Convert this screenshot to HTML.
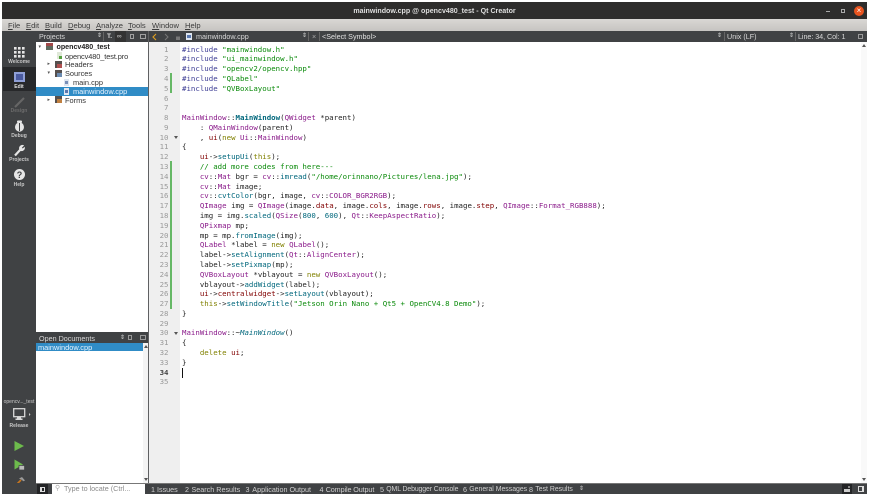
<!DOCTYPE html>
<html><head><meta charset="utf-8">
<style>
html,body{margin:0;padding:0;width:869px;height:497px;overflow:hidden;background:#fff}
body{position:relative;font-family:"Liberation Sans",sans-serif}
div,span.a{position:absolute}
.t{white-space:pre;line-height:10px;height:10px}
#root{position:absolute;left:0;top:0;width:869px;height:497px;filter:blur(.35px)}
.menu{top:20px;font-size:7.6px;color:#3c3c3c;white-space:pre;line-height:11px}
.menu u{text-decoration:underline}
.hd{color:#d8d8d8;font-size:7.2px;white-space:pre;line-height:11px}
.side{color:#c8c8c8;font-size:5px;font-weight:bold;width:34px;left:2px;text-align:center;line-height:6px}
.tree{font-size:7.4px;color:#333;white-space:pre;line-height:9px;height:9px}
.ln{left:150px;width:18.5px;margin-top:.5px;text-align:right;color:#9a9a9a;font:7.4px/10px "DejaVu Sans Mono","Liberation Mono",monospace;height:10px}
.c{left:182px;margin-top:.5px;font:7.42px/10px "DejaVu Sans Mono","Liberation Mono",monospace;white-space:pre;color:#222;height:10px}
.p{color:#3e3e95}.s{color:#0a8a0a}.y{color:#8a1a8a}.f{color:#00677c}.k{color:#808000}.r{color:#800000}.v{color:#5a3a5a}
.bt{top:484px;font-size:7.2px;color:#d0d0d0;white-space:pre;line-height:11px}
</style></head><body><div id="root">
<!-- window -->
<div style="left:2px;top:2px;width:865px;height:492px;background:#fff"></div>
<!-- title bar -->
<div style="left:2px;top:2px;width:865px;height:17px;background:#2e2d2c"></div>
<div class="t" style="left:2px;width:865px;top:6px;text-align:center;color:#dfdfdf;font-size:7.1px;font-weight:bold">mainwindow.cpp @ opencv480_test - Qt Creator</div>
<div style="left:826px;top:11px;width:4px;height:1px;background:#aaa"></div>
<div style="left:841px;top:9px;width:4px;height:4px;border:1px solid #aaa;box-sizing:border-box"></div>
<div style="left:854px;top:6px;width:10px;height:10px;border-radius:50%;background:#e9541f"></div>
<div class="t" style="left:854px;top:5.5px;width:10px;text-align:center;color:#fff;font-size:8px">×</div>
<!-- menu bar -->
<div style="left:2px;top:19px;width:865px;height:12px;background:linear-gradient(#d9d7d4,#c6c4c1)"></div>
<div class="menu" style="left:8px"><u>F</u>ile</div>
<div class="menu" style="left:26px"><u>E</u>dit</div>
<div class="menu" style="left:45px"><u>B</u>uild</div>
<div class="menu" style="left:68px"><u>D</u>ebug</div>
<div class="menu" style="left:96px"><u>A</u>nalyze</div>
<div class="menu" style="left:128px"><u>T</u>ools</div>
<div class="menu" style="left:152px"><u>W</u>indow</div>
<div class="menu" style="left:185px"><u>H</u>elp</div>
<!-- toolbar row -->
<div style="left:2px;top:31px;width:865px;height:11px;background:#404244"></div>
<div class="hd" style="left:39px;top:31px">Projects</div>
<div class="hd" style="left:97px;top:31px;font-size:6px">⇕</div>
<div style="left:103px;top:32px;width:1px;height:9px;background:#666"></div>
<div class="hd" style="left:107px;top:31px;font-size:6.5px;font-weight:bold">T.</div>
<div style="left:115px;top:31px;width:11px;height:11px;background:#333"></div>
<div class="hd" style="left:117px;top:31px;font-size:6.5px">∞</div>
<div style="left:130px;top:34px;width:4px;height:5px;border:1px solid #a0a0a0;box-sizing:border-box"></div>
<div style="left:140px;top:34px;width:6px;height:5px;border:1px solid #a0a0a0;box-sizing:border-box"></div>
<div style="left:148px;top:31px;width:1px;height:452px;background:#5f6062"></div>
<svg style="position:absolute;left:152px;top:33px" width="30" height="8"><path d="M4 1 1 4l3 3" fill="none" stroke="#e0a020" stroke-width="1.1"/><path d="M13 1l3 3-3 3" fill="none" stroke="#777" stroke-width="1"/><rect x="24" y="3.5" width="4" height="3.5" fill="#777"/></svg>
<div style="left:186px;top:33px;width:6px;height:7px;background:#dfe6f0"></div>
<div style="left:187px;top:35px;width:4px;height:3px;background:#5a78b0"></div>
<div class="hd" style="left:196px;top:31px;color:#d8d8d8">mainwindow.cpp</div>
<div class="hd" style="left:302px;top:31px;font-size:6px">⇕</div>
<div style="left:308px;top:32px;width:1px;height:9px;background:#666"></div>
<div class="hd" style="left:312px;top:31px;color:#aaa">×</div>
<div style="left:319px;top:32px;width:1px;height:9px;background:#666"></div>
<div class="hd" style="left:322px;top:31px;color:#e0e0e0">&lt;Select Symbol&gt;</div>
<div class="hd" style="left:717px;top:31px;font-size:6px">⇕</div>
<div style="left:724px;top:32px;width:1px;height:9px;background:#666"></div>
<div class="hd" style="left:727px;top:31px">Unix (LF)</div>
<div class="hd" style="left:789px;top:31px;font-size:6px">⇕</div>
<div style="left:795px;top:32px;width:1px;height:9px;background:#666"></div>
<div class="hd" style="left:798px;top:31px;letter-spacing:-.06px">Line: 34, Col: 1</div>
<div style="left:858px;top:34px;width:5px;height:5px;border:1px solid #999;box-sizing:border-box"></div>
<!-- mode bar -->
<div style="left:2px;top:42px;width:34px;height:452px;background:#404244"></div>
<svg style="position:absolute;left:14px;top:47px" width="11" height="11" fill="#e6e6e6"><rect x="0" y="0" width="2.6" height="2.6"/><rect x="4" y="0" width="2.6" height="2.6"/><rect x="8" y="0" width="2.6" height="2.6"/><rect x="0" y="4" width="2.6" height="2.6"/><rect x="4" y="4" width="2.6" height="2.6"/><rect x="8" y="4" width="2.6" height="2.6"/><rect x="0" y="8" width="2.6" height="2.6"/><rect x="4" y="8" width="2.6" height="2.6"/><rect x="8" y="8" width="2.6" height="2.6"/></svg>
<div class="side" style="top:59px">Welcome</div>
<div style="left:3px;top:67px;width:33px;height:24px;background:#27282a"></div>
<div style="left:14px;top:72px;width:11px;height:10px;background:#8f9fd6"></div>
<div style="left:16px;top:74px;width:7px;height:6px;background:#4a5aa0"></div>
<div class="side" style="top:84px;color:#e0e0e0">Edit</div>
<svg style="position:absolute;left:13px;top:96px" width="13" height="13"><path d="M2 11 11 2" stroke="#666" stroke-width="2"/></svg>
<div class="side" style="top:108px;color:#6c6c6c">Design</div>
<svg style="position:absolute;left:14px;top:120px" width="11" height="12" fill="#e6e6e6"><ellipse cx="5.5" cy="7" rx="4.5" ry="4.6"/><rect x="3" y="0.5" width="5" height="2.5" rx="1"/><rect x="5" y="3" width="1" height="8" fill="#404244"/></svg>
<div class="side" style="top:133px">Debug</div>
<svg style="position:absolute;left:13px;top:144px" width="13" height="13"><path d="M2 11.5 7.5 5.5" stroke="#e6e6e6" stroke-width="2.2"/><path d="M6.5 5a3 3 0 0 1 4-3.5L8.5 3.6l1 1.4 2-1.6a3 3 0 0 1-4 3.2z" fill="#e6e6e6" stroke="#e6e6e6" stroke-width=".7"/></svg>
<div class="side" style="top:157px">Projects</div>
<div style="left:14px;top:169px;width:11px;height:11px;border-radius:50%;background:#e6e6e6"></div>
<div class="t" style="left:14px;width:11px;top:169.5px;text-align:center;color:#404244;font-size:9px;font-weight:bold">?</div>
<div class="side" style="top:182px">Help</div>
<div class="side" style="top:399px;font-weight:normal">opencv..._test</div>
<svg style="position:absolute;left:13px;top:408px" width="18" height="13"><rect x="0.7" y="0.7" width="11" height="8" fill="#404244" stroke="#d8d8d8" stroke-width="1.3"/><rect x="4" y="9" width="4" height="2" fill="#d8d8d8"/><rect x="2.5" y="10.5" width="7" height="1.5" fill="#d8d8d8"/><path d="M16 5v3l1.5-1.5z" fill="#ccc"/></svg>
<div class="side" style="top:423px">Release</div>
<svg style="position:absolute;left:14px;top:440px" width="11" height="12"><path d="M0.5 1 10 6 .5 11z" fill="#6dbb4c"/></svg>
<svg style="position:absolute;left:14px;top:459px" width="11" height="12"><path d="M0.5 .5 9 5.5 .5 10.5z" fill="#6dbb4c"/><rect x="5" y="6.5" width="5.5" height="4.5" fill="#bbb" stroke="#404244" stroke-width=".7"/></svg>
<svg style="position:absolute;left:13px;top:476px" width="13" height="12"><path d="M1.5 10.5 8 4" stroke="#c8761e" stroke-width="1.6"/><path d="M6 2.5 9 1l3 3.5-1.5 .8-2-1.5z" fill="#9a9a9a"/></svg>
<!-- project tree -->
<div style="left:36px;top:42px;width:112px;height:290px;background:#fff"></div>
<div class="tree" style="left:38.5px;top:42.5px;color:#555;font-size:5px">▾</div>
<div style="left:46px;top:43px;width:7px;height:7px;background:#5e6a5e"></div>
<div style="left:46px;top:43px;width:7px;height:3px;background:#a04848"></div>
<div class="tree" style="left:56.5px;top:42.5px;font-weight:bold;color:#222;font-size:7.1px">opencv480_test</div>
<div style="left:57px;top:52px;width:5px;height:7px;background:#dfe8d8"></div>
<div style="left:59px;top:56px;width:3px;height:3px;background:#55a040"></div>
<div class="tree" style="left:65px;top:51.5px;letter-spacing:-.1px">opencv480_test.pro</div>
<div class="tree" style="left:47.5px;top:60px;color:#555;font-size:5px">▸</div>
<div style="left:55px;top:61px;width:7px;height:7px;background:#56504e"></div>
<div style="left:57px;top:64px;width:5px;height:4px;background:#b05050"></div>
<div class="tree" style="left:65px;top:60px">Headers</div>
<div class="tree" style="left:47.5px;top:69px;color:#555;font-size:5px">▾</div>
<div style="left:55px;top:70px;width:7px;height:7px;background:#56504e"></div>
<div style="left:57px;top:73px;width:5px;height:4px;background:#6a8ab0"></div>
<div class="tree" style="left:65px;top:69px">Sources</div>
<div style="left:64px;top:79px;width:5px;height:7px;background:#dfe6f0"></div>
<div style="left:65px;top:81px;width:3px;height:3px;background:#7a90b8"></div>
<div class="tree" style="left:73px;top:78px">main.cpp</div>
<div style="left:36px;top:87px;width:112px;height:9px;background:#308cc6"></div>
<div style="left:64px;top:88px;width:5px;height:7px;background:#dfe6f0"></div>
<div style="left:65px;top:90px;width:3px;height:3px;background:#5a78b0"></div>
<div class="tree" style="left:73px;top:87px;color:#e8f4ff">mainwindow.cpp</div>
<div class="tree" style="left:47.5px;top:96px;color:#555;font-size:5px">▸</div>
<div style="left:55px;top:96px;width:7px;height:7px;background:#56504e"></div>
<div style="left:57px;top:99px;width:5px;height:4px;background:#c08040"></div>
<div class="tree" style="left:65px;top:96px">Forms</div>
<!-- open docs -->
<div style="left:36px;top:332px;width:112px;height:11px;background:#404244"></div>
<div class="hd" style="left:39px;top:332.5px">Open Documents</div>
<div class="hd" style="left:120px;top:332.5px;font-size:6px">⇕</div>
<div style="left:128px;top:335px;width:4px;height:5px;border:1px solid #999;box-sizing:border-box"></div>
<div style="left:140px;top:335px;width:6px;height:5px;border:1px solid #999;box-sizing:border-box"></div>
<div style="left:36px;top:343px;width:107px;height:8px;background:#308cc6"></div>
<div class="tree" style="left:38px;top:342.5px;color:#e8f4ff">mainwindow.cpp</div>
<div style="left:143px;top:343px;width:5px;height:140px;background:#f4f4f4"></div>
<div style="left:143.5px;top:345px;width:0;height:0;border:2px solid transparent;border-bottom:3px solid #555;border-top:0"></div>
<div style="left:143.5px;top:478px;width:0;height:0;border:2px solid transparent;border-top:3px solid #555;border-bottom:0"></div>
<!-- editor gutter -->
<div style="left:149px;top:42px;width:31px;height:441px;background:#efefef"></div>
<div style="left:170px;top:73px;width:1.5px;height:20px;background:#66b866"></div>
<div style="left:170px;top:161px;width:1.5px;height:148px;background:#66b866"></div>
<div class="ln" style="top:44px">1</div><div class="ln" style="top:53.8px">2</div><div class="ln" style="top:63.6px">3</div><div class="ln" style="top:73.4px">4</div><div class="ln" style="top:83.2px">5</div><div class="ln" style="top:93px">6</div><div class="ln" style="top:102.7px">7</div><div class="ln" style="top:112.5px">8</div><div class="ln" style="top:122.3px">9</div><div class="ln" style="top:132.1px">10</div><div class="ln" style="top:141.9px">11</div><div class="ln" style="top:151.7px">12</div><div class="ln" style="top:161.5px">13</div><div class="ln" style="top:171.3px">14</div><div class="ln" style="top:181.1px">15</div><div class="ln" style="top:190.9px">16</div><div class="ln" style="top:200.6px">17</div><div class="ln" style="top:210.4px">18</div><div class="ln" style="top:220.2px">19</div><div class="ln" style="top:230px">20</div><div class="ln" style="top:239.8px">21</div><div class="ln" style="top:249.6px">22</div><div class="ln" style="top:259.4px">23</div><div class="ln" style="top:269.2px">24</div><div class="ln" style="top:279px">25</div><div class="ln" style="top:288.8px">26</div><div class="ln" style="top:298.5px">27</div><div class="ln" style="top:308.3px">28</div><div class="ln" style="top:318.1px">29</div><div class="ln" style="top:327.9px">30</div><div class="ln" style="top:337.7px">31</div><div class="ln" style="top:347.5px">32</div><div class="ln" style="top:357.3px">33</div><div class="ln" style="top:367.1px;color:#444;font-weight:bold">34</div><div class="ln" style="top:376.9px">35</div>
<div style="left:173.5px;top:136px;width:0;height:0;border:2px solid transparent;border-top:3px solid #555;border-bottom:0"></div>
<div style="left:173.5px;top:332px;width:0;height:0;border:2px solid transparent;border-top:3px solid #555;border-bottom:0"></div>
<!-- code -->
<div class="c" style="top:44px"><span class="p">#include</span> <span class="s">"mainwindow.h"</span></div>
<div class="c" style="top:53.8px"><span class="p">#include</span> <span class="s">"ui_mainwindow.h"</span></div>
<div class="c" style="top:63.6px"><span class="p">#include</span> <span class="s">"opencv2/opencv.hpp"</span></div>
<div class="c" style="top:73.4px"><span class="p">#include</span> <span class="s">"QLabel"</span></div>
<div class="c" style="top:83.2px"><span class="p">#include</span> <span class="s">"QVBoxLayout"</span></div>
<div class="c" style="top:112.5px"><span class="y">MainWindow</span>::<b class="f">MainWindow</b>(<span class="y">QWidget</span> *parent)</div>
<div class="c" style="top:122.3px">    : <span class="y">QMainWindow</span>(parent)</div>
<div class="c" style="top:132.1px">    , <span class="r">ui</span>(<span class="k">new</span> <span class="y">Ui</span>::<span class="y">MainWindow</span>)</div>
<div class="c" style="top:141.9px">{</div>
<div class="c" style="top:151.7px">    <span class="r">ui</span>-&gt;<span class="f">setupUi</span>(<span class="k">this</span>);</div>
<div class="c" style="top:161.5px">    <span class="s">// add more codes from here---</span></div>
<div class="c" style="top:171.3px">    <span class="y">cv</span>::<span class="y">Mat</span> bgr = <span class="y">cv</span>::<span class="f">imread</span>(<span class="s">"/home/orinnano/Pictures/lena.jpg"</span>);</div>
<div class="c" style="top:181.1px">    <span class="y">cv</span>::<span class="y">Mat</span> image;</div>
<div class="c" style="top:190.9px">    <span class="y">cv</span>::<span class="f">cvtColor</span>(bgr, image, <span class="y">cv</span>::<span class="y">COLOR_BGR2RGB</span>);</div>
<div class="c" style="top:200.6px">    <span class="y">QImage</span> img = <span class="y">QImage</span>(image.<span class="r">data</span>, image.<span class="r">cols</span>, image.<span class="r">rows</span>, image.<span class="r">step</span>, <span class="y">QImage</span>::<span class="y">Format_RGB888</span>);</div>
<div class="c" style="top:210.4px">    img = img.<span class="f">scaled</span>(<span class="y">QSize</span>(<span class="f">800</span>, <span class="f">600</span>), <span class="y">Qt</span>::<span class="y">KeepAspectRatio</span>);</div>
<div class="c" style="top:220.2px">    <span class="y">QPixmap</span> mp;</div>
<div class="c" style="top:230px">    mp = mp.<span class="f">fromImage</span>(img);</div>
<div class="c" style="top:239.8px">    <span class="y">QLabel</span> *label = <span class="k">new</span> <span class="y">QLabel</span>();</div>
<div class="c" style="top:249.6px">    label-&gt;<span class="f">setAlignment</span>(<span class="y">Qt</span>::<span class="y">AlignCenter</span>);</div>
<div class="c" style="top:259.4px">    label-&gt;<span class="f">setPixmap</span>(mp);</div>
<div class="c" style="top:269.2px">    <span class="y">QVBoxLayout</span> *vblayout = <span class="k">new</span> <span class="y">QVBoxLayout</span>();</div>
<div class="c" style="top:279px">    vblayout-&gt;<span class="f">addWidget</span>(label);</div>
<div class="c" style="top:288.8px">    <span class="r">ui</span>-&gt;<span class="r">centralwidget</span>-&gt;<span class="f">setLayout</span>(vblayout);</div>
<div class="c" style="top:298.5px">    <span class="k">this</span>-&gt;<span class="f">setWindowTitle</span>(<span class="s">"Jetson Orin Nano + Qt5 + OpenCV4.8 Demo"</span>);</div>
<div class="c" style="top:308.3px">}</div>
<div class="c" style="top:327.9px"><span class="y">MainWindow</span>::~<i class="f">MainWindow</i>()</div>
<div class="c" style="top:337.7px">{</div>
<div class="c" style="top:347.5px">    <span class="k">delete</span> <span class="r">ui</span>;</div>
<div class="c" style="top:357.3px">}</div>
<div style="left:182px;top:367.5px;width:1px;height:10px;background:#111"></div>
<!-- editor scrollbar -->
<div style="left:861px;top:42px;width:6px;height:441px;background:#f9f9f9"></div>
<div style="left:862px;top:44px;width:0;height:0;border:2px solid transparent;border-bottom:3px solid #555;border-top:0"></div>
<div style="left:862px;top:478px;width:0;height:0;border:2px solid transparent;border-top:3px solid #555;border-bottom:0"></div>
<!-- bottom bar -->
<div style="left:2px;top:483px;width:865px;height:11px;background:#404244"></div>
<div style="left:36px;top:483px;width:831px;height:1px;background:#777"></div>
<div style="left:37px;top:484px;width:11px;height:10px;background:#232426"></div>
<div style="left:40px;top:487px;width:5px;height:5px;border:1px solid #ddd;box-sizing:border-box;border-left-width:2px"></div>
<div style="left:52px;top:484px;width:93px;height:10px;background:#fff"></div>
<div class="t" style="left:55px;top:484px;font-size:7px;color:#aaa">⚲</div>
<div class="t" style="left:64px;top:484px;font-size:7.2px;color:#8a8a8a">Type to locate (Ctrl...</div>
<div class="bt" style="left:151px">1</div><div class="bt" style="left:157px">Issues</div>
<div class="bt" style="left:185px">2</div><div class="bt" style="left:191.5px">Search Results</div>
<div class="bt" style="left:245.5px">3</div><div class="bt" style="left:252.3px">Application Output</div>
<div class="bt" style="left:319.5px">4</div><div class="bt" style="left:325.7px;letter-spacing:-.1px">Compile Output</div>
<div class="bt" style="left:380px">5</div><div class="bt" style="left:386.3px;letter-spacing:-.1px;font-size:6.9px">QML Debugger Console</div>
<div class="bt" style="left:463px">6</div><div class="bt" style="left:469.3px;font-size:6.9px">General Messages</div>
<div class="bt" style="left:529px">8</div><div class="bt" style="left:535.3px;font-size:6.9px">Test Results</div>
<div class="bt" style="left:579px;font-size:6px">⇕</div>
<div style="left:842px;top:484px;width:10px;height:10px;background:#232426"></div>
<div style="left:844px;top:489px;width:6px;height:3px;background:#ccc"></div>
<div style="left:848px;top:486px;width:2px;height:2px;background:#888"></div>
<div style="left:858px;top:486px;width:6px;height:6px;border:1px solid #ddd;box-sizing:border-box;border-right-width:2px"></div>
</div></body></html>
